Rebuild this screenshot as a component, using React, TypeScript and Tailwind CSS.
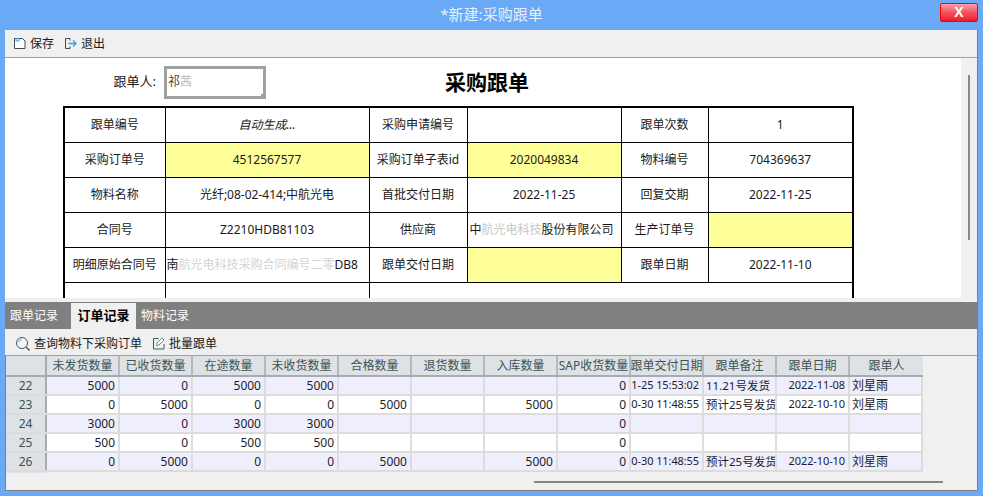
import React from 'react'

const FONT = "font-['Noto_Sans','Noto_Sans_CJK_SC',sans-serif]"

// form table: label / value pairs per row
const YELLOW = 'bg-[#ffff99]'

const formRows = [
  [['跟单编号'], ['自动生成...', 'italic'], ['采购申请编号'], [''], ['跟单次数'], ['1']],
  [['采购订单号'], ['4512567577', YELLOW], ['采购订单子表id'], ['2020049834', YELLOW], ['物料编号'], ['704369637']],
  [['物料名称'], ['光纤;08-02-414;中航光电'], ['首批交付日期'], ['2022-11-25'], ['回复交期'], ['2022-11-25']],
  [['合同号'], ['Z2210HDB81103'], ['供应商'], ['supplier'], ['生产订单号'], ['', YELLOW]],
  [['明细原始合同号'], ['contract'], ['跟单交付日期'], ['', YELLOW], ['跟单日期'], ['2022-11-10']],
]

const headers = ['未发货数量', '已收货数量', '在途数量', '未收货数量', '合格数量', '退货数量', '入库数量', 'SAP收货数量', '跟单交付日期', '跟单备注', '跟单日期', '跟单人']

const rows = [
  { id: 22, v: ['5000', '0', '5000', '5000', '', '', '', '0', '2022-11-25 15:53:02', '11.21号发货', '2022-11-08', '刘星雨'] },
  { id: 23, v: ['0', '5000', '0', '0', '5000', '', '5000', '0', '2022-10-30 11:48:55', '预计25号发货', '2022-10-10', '刘星雨'] },
  { id: 24, v: ['3000', '0', '3000', '3000', '', '', '', '0', '', '', '', ''] },
  { id: 25, v: ['500', '0', '500', '500', '', '', '', '0', '', '', '', ''] },
  { id: 26, v: ['0', '5000', '0', '0', '5000', '', '5000', '0', '2022-10-30 11:48:55', '预计25号发货', '2022-10-10', '刘星雨'] },
]

function FormValue({ text }: { text: string }) {
  if (text === 'supplier') {
    return (
      <div className="w-full overflow-hidden whitespace-nowrap text-left pl-[2px]">
        中<span className="text-[#c8c8c8]">航光电科技</span>股份有限公司
      </div>
    )
  }
  if (text === 'contract') {
    return (
      <div className="w-full overflow-hidden whitespace-nowrap text-left pl-[1px]">
        南<span className="text-[#d4d4d4]">航光电科技采购合同编号二零</span>DB8
      </div>
    )
  }
  return <>{text}</>
}

function FormTable() {
  const widths = ['w-[101px]', 'w-[204px]', 'w-[98px]', 'w-[154px]', 'w-[87px]', 'w-[145px]']
  return (
    <table className="ml-[58px] table-fixed border-collapse border-2 border-black w-[789px] text-[12px] text-[#1a1a1a]">
      <colgroup>
        {widths.map((w) => (
          <col key={w} className={w} />
        ))}
      </colgroup>
      <tbody>
        {formRows.map((row, i) => (
          <tr key={i} className="h-[35px]">
            {row.map(([text, cls], j) => (
              <td key={j} className={`border border-black text-center p-0 overflow-hidden whitespace-nowrap ${cls ?? ''}`}>
                <FormValue text={text} />
              </td>
            ))}
          </tr>
        ))}
        <tr className="h-[35px]">
          <td className="border border-black" />
          <td className="border border-black" />
          <td />
          <td />
          <td />
          <td />
        </tr>
      </tbody>
    </table>
  )
}

function SaveIcon() {
  return (
    <svg width="13" height="13" viewBox="0 0 13 13" fill="none">
      <path d="M1.5 1.5h8l2.5 2.5v7.5h-10.5z" fill="#fff" stroke="#3f4a55" />
      <path d="M3 1.5h3v2.5h-3z" fill="#cfe6fa" stroke="#2f8fdc" strokeWidth="0.8" />
    </svg>
  )
}

function ExitIcon() {
  return (
    <svg width="14" height="13" viewBox="0 0 14 13" fill="none">
      <path d="M6 1.5h-4.5v10h4.5" stroke="#3f4a55" />
      <path d="M6 1.5v2M6 9.5v2" stroke="#3f4a55" />
      <path d="M4.5 6.5h7M9 3.5l3 3-3 3" stroke="#2aa1e8" strokeWidth="1.3" />
    </svg>
  )
}

function SearchIcon() {
  return (
    <svg width="16" height="16" viewBox="0 0 16 16" fill="none">
      <circle cx="7" cy="7" r="5.5" fill="#f3f8fd" stroke="#4a5560" />
      <path d="M3.5 6.5a3.5 3.5 0 0 1 3-3" stroke="#48a6e6" />
      <path d="M11 11l3.5 3.5" stroke="#4a5560" strokeWidth="1.4" />
    </svg>
  )
}

function EditIcon() {
  return (
    <svg width="13" height="13" viewBox="0 0 13 13" fill="none">
      <path d="M6.5 1.5h-5v10.5h10.5v-5" stroke="#4a5560" />
      <path d="M4.5 8.5l.5-2.5 5-5 2 2-5 5z" fill="#fff" stroke="#35b27a" />
    </svg>
  )
}

function GridCell({ text, index }: { text: string; index: number }) {
  // 跟单交付日期 is cut off on the left, 备注 on the right
  const align = index === 9 || index === 11 ? 'justify-start pl-[2px]' : 'justify-end pr-[3px]'
  const size = index === 8 || index === 10 ? 'text-[11px] tracking-[-0.1px]' : index === 9 ? 'text-[11.5px]' : ''
  return (
    <div className={`w-[73px] h-full shrink-0 flex items-center overflow-hidden whitespace-nowrap border-r-2 border-[#dcdcdc] ${align} ${size}`}>
      <span className="shrink-0">{text}</span>
    </div>
  )
}

function DataGrid() {
  return (
    <div className="h-[118px] border-t border-[#a0a0a0] overflow-hidden bg-[#f0f0f0] text-[12px]">
      <div className="flex h-[21px] w-[917px] bg-[#dee2e6] border-b-2 border-[#a6abab] text-[#3d5252]">
        <div className="w-[41px] shrink-0 border-r-2 border-[#a6abab]" />
        {headers.map((h) => (
          <div key={h} className="w-[73px] shrink-0 flex items-center justify-center overflow-hidden whitespace-nowrap border-r-2 border-[#b4b9b9] last:border-r-0">
            <span className="shrink-0">{h}</span>
          </div>
        ))}
      </div>
      {rows.map((row, i) => (
        <div key={row.id} className={`flex h-[19px] w-[917px] border-b-2 border-[#dcdcdc] text-[#1c1c2c] ${i % 2 === 0 ? 'bg-[#eeeefd]' : 'bg-white'}`}>
          <div className="w-[41px] shrink-0 flex items-center justify-center bg-[#dee2e6] border-r-2 border-b-0 border-[#a6abab] text-[#3d5252]">
            {row.id}
          </div>
          {row.v.map((text, j) => (
            <GridCell key={j} text={text} index={j} />
          ))}
        </div>
      ))}
      <div className="flex h-[2px] w-[917px]">
        <div className="w-[41px] bg-[#dee2e6]" />
      </div>
    </div>
  )
}

export default function App() {
  return (
    <div className={`w-[983px] h-[496px] overflow-hidden flex flex-col bg-[#6aa9f5] ${FONT} text-[12px] text-[#1a1a1a]`}>
      <div className="h-[30px] shrink-0 grid grid-cols-[1fr_auto_1fr] items-center">
        <div />
        <div className="text-[15px] text-[#e6effb] -mt-[1px]">*新建:采购跟单</div>
        <div className="flex justify-end pr-[5px] pb-[7px] pt-[1px]">
          <button className="w-[38px] h-[19px] rounded-[2px] border border-[#ff0000] bg-gradient-to-b from-[#f8a0a8] via-[#f45060] to-[#f01020] text-white font-bold text-[14px] leading-none font-['Liberation_Sans',sans-serif]">
            X
          </button>
        </div>
      </div>

      <div className="mx-[5px] w-[973px] h-[461px] flex flex-col bg-[#f0f0f0] border-b border-r border-[#808080]">
        <div className="h-[28px] shrink-0 flex items-center pl-[8px] border-b border-[#a0a0a0]">
          <div className="flex items-center gap-[4px]">
            <SaveIcon />
            <span>保存</span>
          </div>
          <div className="flex items-center gap-[3px] ml-[10px]">
            <ExitIcon />
            <span>退出</span>
          </div>
        </div>

        <div className="h-[240px] shrink-0 flex">
          <div className="w-[957px] bg-white overflow-hidden">
            <div className="flex items-center h-[48px]">
              <span className="w-[151px] text-right text-[13px]">跟单人:</span>
              <div className="relative ml-[8px] w-[102px] h-[33px] border-[3px] border-[#a0a0a0] flex items-center text-[#444] pl-[1px]">
                祁<span className="text-[#bbb]">茜</span>
                <span className="absolute -right-[3px] -bottom-[3px] w-[5px] h-[5px] bg-[#a0a0a0]" />
              </div>
              <span className="ml-[179px] text-[21px] font-bold text-black leading-none">采购跟单</span>
            </div>
            <FormTable />
          </div>
          <div className="w-[16px] flex justify-center pt-[17px]">
            <div className="w-[2px] h-[165px] bg-[#888]" />
          </div>
        </div>

        <div className="h-[4px] shrink-0" />

        <div className="h-[27px] shrink-0 flex items-end bg-[#808080] text-[12px]">
          <div className="h-[26px] flex items-center pl-[5px] pr-[13px] text-white">跟单记录</div>
          <div className="h-[26px] flex items-center w-[65px] justify-center bg-[#f0f0f0] font-bold text-[13px] text-black">订单记录</div>
          <div className="h-[26px] flex items-center pl-[5px] text-white">物料记录</div>
        </div>

        <div className="h-[26px] shrink-0 flex items-center pl-[10px] pt-[3px]">
          <div className="flex items-center gap-[3px]">
            <SearchIcon />
            <span>查询物料下采购订单</span>
          </div>
          <div className="flex items-center gap-[4px] ml-[10px]">
            <EditIcon />
            <span>批量跟单</span>
          </div>
        </div>

        <div className="border-l border-[#808080]">
          <DataGrid />
          <div className="h-[17px] flex items-center pl-[528px] pt-[1px]">
            <div className="w-[409px] h-[2px] bg-[#888]" />
          </div>
        </div>
      </div>
    </div>
  )
}
